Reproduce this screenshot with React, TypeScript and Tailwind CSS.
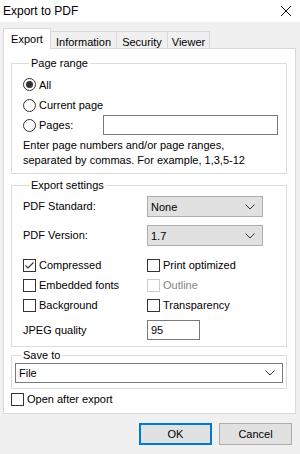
import React from "react";

const font = "font-['Liberation_Sans',Arial,sans-serif] text-[11px]";

function Chevron() {
  return (
    <svg width="10" height="6" viewBox="0 0 10 6" className="shrink-0">
      <path d="M0.5 0.5 L5 5 L9.5 0.5" fill="none" stroke="#333" strokeWidth="1" />
    </svg>
  );
}

function Radio({ checked, label }: { checked?: boolean; label: string }) {
  return (
    <div className="flex items-center gap-[3px]">
      <span className="flex h-[13px] w-[13px] items-center justify-center rounded-full border border-[#333] bg-white">
        {checked && <span className="h-[7px] w-[7px] rounded-full bg-[#333]" />}
      </span>
      <span className="leading-[14px]">{label}</span>
    </div>
  );
}

function Check({ checked, disabled, label }: { checked?: boolean; disabled?: boolean; label: string }) {
  return (
    <div className="flex items-center gap-[3px]">
      <span
        className={`flex h-[13px] w-[13px] items-center justify-center border bg-white ${
          disabled ? "border-[#cccccc]" : "border-[#333]"
        }`}
      >
        {checked && (
          <svg width="11" height="11" viewBox="0 0 11 11">
            <path d="M1.5 5.5 L4 8 L9.5 2.5" fill="none" stroke="#333" strokeWidth="1.1" />
          </svg>
        )}
      </span>
      <span className={`leading-[14px] ${disabled ? "text-[#838383]" : "text-black"}`}>{label}</span>
    </div>
  );
}

function Select({ value, className = "" }: { value: string; className?: string }) {
  return (
    <div
      className={`flex items-center justify-between border border-[#adadad] bg-[#e1e1e1] pl-[3px] pr-[7px] ${className}`}
    >
      <span className="leading-[14px]">{value}</span>
      <Chevron />
    </div>
  );
}

function Group({ title, className = "", children }: { title: string; className?: string; children: React.ReactNode }) {
  return (
    <fieldset className={`border border-[#dcdcdc] ${className}`}>
      <legend className="ml-[6px] px-[2px] leading-[14px]">{title}</legend>
      {children}
    </fieldset>
  );
}

export default function App() {
  const tabs = [
    { label: "Information", w: "w-[67px]" },
    { label: "Security", w: "w-[52px]" },
    { label: "Viewer", w: "w-[43px]" },
  ];

  return (
    <div className={`flex h-[454px] w-[300px] flex-col overflow-hidden bg-[#f0f0f0] text-black ${font}`}>
      {/* Title bar */}
      <div className="flex h-[22px] items-center justify-between bg-white pl-[3px] pr-[9px]">
        <span className="text-[12px] leading-[14px]">Export to PDF</span>
        <svg width="10" height="10" viewBox="0 0 10 10">
          <path d="M0 0 L10 10 M10 0 L0 10" stroke="#111" strokeWidth="1" />
        </svg>
      </div>

      {/* Tabs */}
      <div className="mt-[6px] flex h-[20px] items-end px-[3px]">
        <div className="relative z-10 -mb-px flex h-[21px] w-[48px] items-start justify-center border border-b-0 border-[#d9d9d9] bg-white pt-[2px]">
          Export
        </div>
        {tabs.map((t) => (
          <div
            key={t.label}
            className={`-ml-px flex h-[17px] items-start justify-center border border-b-0 border-[#d9d9d9] bg-[#f0f0f0] pt-[2px] ${t.w}`}
          >
            {t.label}
          </div>
        ))}
      </div>

      {/* Panel */}
      <div className="mx-[3px] mr-[4px] flex h-[366px] flex-col border border-[#d9d9d9] bg-white pl-[7px] pr-[8px] pt-[7px]">
        <Group title="Page range" className="pb-[5px] pl-[11px] pr-[8px]">
          <div className="mt-[4px] flex flex-col">
            <div className="flex h-[21px] items-center">
              <Radio checked label="All" />
            </div>
            <div className="flex h-[20px] items-center">
              <Radio label="Current page" />
            </div>
            <div className="flex h-[20px] items-center justify-between">
              <Radio label="Pages:" />
              <div className="h-[20px] w-[175px] border border-[#7a7a7a] bg-white" />
            </div>
          </div>
          <p className="mt-[3px] leading-[15px]">
            Enter page numbers and/or page ranges,
            <br />
            separated by commas. For example, 1,3,5-12
          </p>
        </Group>

        <Group title="Export settings" className="mt-[4px] pb-[6px] pl-[11px] pr-[23px]">
          <div className="mt-[4px] flex h-[21px] items-center justify-between">
            <span>PDF Standard:</span>
            <Select value="None" className="h-[21px] w-[116px]" />
          </div>
          <div className="mt-[8px] flex h-[21px] items-center justify-between">
            <span>PDF Version:</span>
            <Select value="1.7" className="h-[21px] w-[116px]" />
          </div>
          <div className="mt-[9px] grid grid-cols-[124px_1fr]">
            <div className="flex h-[20px] items-center">
              <Check checked label="Compressed" />
            </div>
            <div className="flex h-[20px] items-center">
              <Check label="Print optimized" />
            </div>
            <div className="flex h-[20px] items-center">
              <Check label="Embedded fonts" />
            </div>
            <div className="flex h-[20px] items-center">
              <Check disabled label="Outline" />
            </div>
            <div className="flex h-[20px] items-center">
              <Check label="Background" />
            </div>
            <div className="flex h-[20px] items-center">
              <Check label="Transparency" />
            </div>
          </div>
          <div className="mt-[5px] grid grid-cols-[124px_1fr] items-center">
            <span>JPEG quality</span>
            <div className="flex h-[20px] w-[53px] items-center border border-[#7a7a7a] bg-white pl-[3px]">95</div>
          </div>
        </Group>

        <Group title="Save to" className="mt-px px-[3px] pb-[5px]">
          <div className="mt-px flex h-[20px] items-center justify-between border border-[#7a7a7a] bg-white pl-[3px] pr-[7px]">
            <span>File</span>
            <Chevron />
          </div>
        </Group>

        <div className="flex h-[20px] items-center">
          <Check label="Open after export" />
        </div>
      </div>

      {/* Buttons */}
      <div className="mt-[9px] flex justify-end gap-[7px] pr-[8px]">
        <button className="flex h-[22px] w-[73px] items-center justify-center border-2 border-[#0078d7] bg-[#e1e1e1]">
          OK
        </button>
        <button className="flex h-[22px] w-[73px] items-center justify-center border border-[#adadad] bg-[#e1e1e1]">
          Cancel
        </button>
      </div>
    </div>
  );
}
